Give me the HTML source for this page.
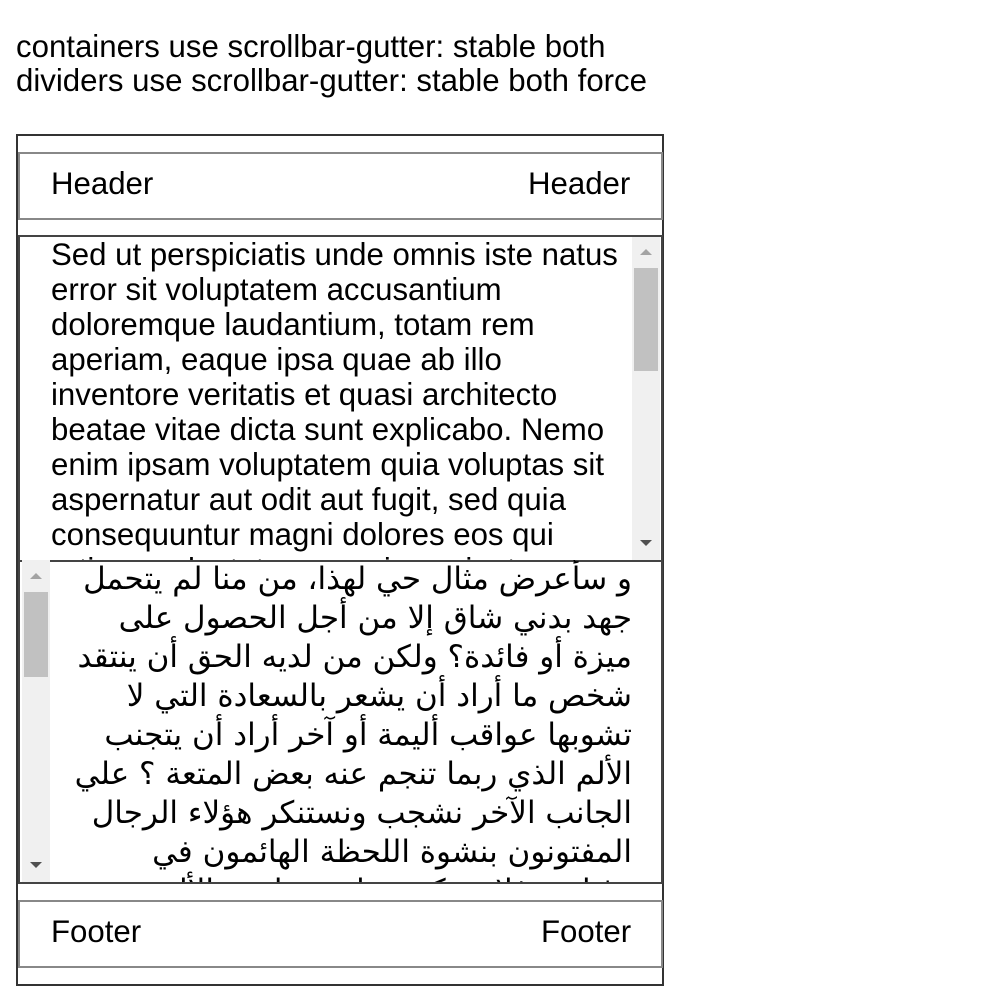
<!DOCTYPE html>
<html><head><meta charset="utf-8"><style>
body{margin:0;background:#fff;font-family:"Liberation Sans",Arial,sans-serif;font-size:31.2px;color:#000;}
.a{position:absolute;box-sizing:border-box;}
.sb{position:absolute;background:#f0f0f0;width:28px;}
.th{position:absolute;left:2px;width:24px;background:#c1c1c1;}
.up,.dn{position:absolute;left:8px;width:0;height:0;border-left:6px solid transparent;border-right:6px solid transparent;}
.up{border-bottom:6px solid #a3a3a3;}
.dn{border-top:6px solid #505050;}
</style></head><body>
<div class="a" style="left:16px;top:30px;line-height:34px;white-space:nowrap">containers use scrollbar-gutter: stable both<br>dividers use scrollbar-gutter: stable both force</div>
<div class="a" style="left:16px;top:134px;width:648px;height:852px;border:2px solid #333"></div>
<div class="a" style="left:18px;top:152px;width:645px;height:68px;border:2px solid #888"></div>
<div class="a" style="left:51px;top:166px;line-height:35px">Header</div>
<div class="a" style="left:528px;top:166px;line-height:35px">Header</div>
<div class="a" style="left:18px;top:235px;width:645px;height:327px;border:2px solid #444;overflow:hidden">
 <div style="position:absolute;left:31px;top:0;width:580px;line-height:35px">Sed ut perspiciatis unde omnis iste natus error sit voluptatem accusantium doloremque laudantium, totam rem aperiam, eaque ipsa quae ab illo inventore veritatis et quasi architecto beatae vitae dicta sunt explicabo. Nemo enim ipsam voluptatem quia voluptas sit aspernatur aut odit aut fugit, sed quia consequuntur magni dolores eos qui ratione voluptatem sequi nesciunt.</div>
 <div class="sb" style="left:612px;top:0;height:323px"><div class="up" style="top:12px"></div><div class="th" style="top:31px;height:103px"></div><div class="dn" style="top:303px"></div></div>
</div>
<div class="a" style="left:18px;top:560px;width:645px;height:324px;border:2px solid #444;border-top:none;overflow:hidden">
 <div dir="rtl" style="position:absolute;left:50px;top:0;width:562px;line-height:39px;font-family:'DejaVu Sans',sans-serif;font-size:31px">و سأعرض مثال حي لهذا، من منا لم يتحمل جهد بدني شاق إلا من أجل الحصول على ميزة أو فائدة؟ ولكن من لديه الحق أن ينتقد شخص ما أراد أن يشعر بالسعادة التي لا تشوبها عواقب أليمة أو آخر أراد أن يتجنب الألم الذي ربما تنجم عنه بعض المتعة ؟ علي الجانب الآخر نشجب ونستنكر هؤلاء الرجال المفتونون بنشوة اللحظة الهائمون في رغباتهم فلا يدركون ما يعقبها من الألم</div>
 <div class="sb" style="left:2px;top:0;height:322px"><div class="up" style="top:13px"></div><div class="th" style="top:32px;height:85px"></div><div class="dn" style="top:302px"></div></div>
</div>
<div class="a" style="left:18px;top:900px;width:645px;height:68px;border:2px solid #888"></div>
<div class="a" style="left:51px;top:914px;line-height:35px">Footer</div>
<div class="a" style="left:541px;top:914px;line-height:35px">Footer</div>
</body></html>
